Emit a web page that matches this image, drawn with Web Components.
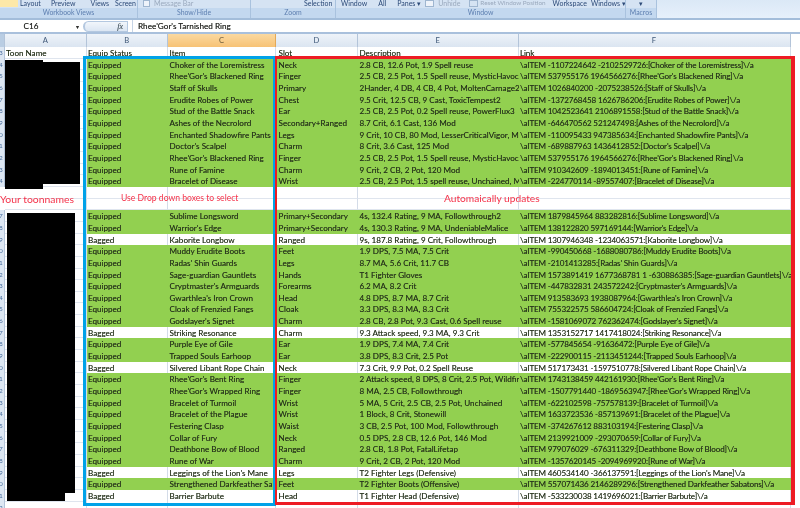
<!DOCTYPE html>
<html><head><meta charset="utf-8"><title>Gear sheet</title>
<style>
html,body{margin:0;padding:0;background:#fff;}
body{width:800px;height:508px;overflow:hidden;font-family:Lato,"Liberation Sans",sans-serif;color:#222;}
</style></head><body>
<xl-app>
  <xl-ribbon>
    <xl-rgroup w="138" label="Workbook Views"><i style="width:18px;height:8px;background:#fde8a8;margin-right:2px"></i><span>Layout</span><span style="margin-left:10px">Preview</span><span style="margin-left:15px">Views</span><span style="margin-left:6px">Screen</span></xl-rgroup>
    <xl-rgroup w="113" label="Show/Hide"><i style="width:5px;height:5px;border:1px solid #9fb6d0;background:#eef3fa;margin:0 4px 0 5px"></i><span style="color:#9aa9bd">Message Bar</span></xl-rgroup>
    <xl-rgroup w="85" label="Zoom"><span style="margin-left:53px">Selection</span></xl-rgroup>
    <xl-rgroup w="290" label="Window"><span style="margin-left:5px">Window</span><span style="margin-left:11px">All</span><span style="margin-left:11px">Panes ▾</span><i style="width:7px;height:5px;border:1px solid #9fb6d0;background:#eef3fa;margin:0 4px 0 4px"></i><span style="color:#9aa9bd">Unhide</span><i style="width:7px;height:5px;border:1px solid #9fb6d0;margin:0 2px 0 9px"></i><span style="color:#9aa9bd;font-size:6.4px">Reset Window Position</span><span style="margin-left:7px">Workspace</span><span style="margin-left:4px">Windows ▾</span></xl-rgroup>
    <xl-rgroup w="31" label="Macros"><span style="margin-left:13px">▾</span></xl-rgroup>
  </xl-ribbon>
  <xl-formula name="C16" value="Rhee'Gor's Tarnished Ring"></xl-formula>
  <xl-sheet></xl-sheet>
  <xl-overlays></xl-overlays>
</xl-app>
<script>
const COLS='5px 81.5px 81.5px 108px 82px 160.5px 272px 1fr';
const esc=s=>String(s).replace(/&/g,'&amp;').replace(/</g,'&lt;');
class XlApp extends HTMLElement{constructor(){super();this.attachShadow({mode:'open'}).innerHTML=`<style>:host{display:flex;flex-direction:column;position:relative;width:800px;height:508px;overflow:hidden;filter:blur(.3px);font:8.1px Lato,"Liberation Sans",sans-serif;color:#26331c}</style><slot></slot>`;}}
class XlRibbon extends HTMLElement{constructor(){super();this.attachShadow({mode:'open'}).innerHTML=`<style>:host{display:flex;flex:none;height:20px;box-sizing:border-box;background:linear-gradient(#dbe8f6,#e6f0fb);border-bottom:2px solid #a3bdda;overflow:hidden}</style><slot></slot>`;}}
class XlRgroup extends HTMLElement{connectedCallback(){if(this.shadowRoot)return;const r=this.attachShadow({mode:'open'});r.innerHTML=`<style>
:host{display:flex;flex-direction:column;flex:none;width:${this.getAttribute('w')}px;height:18px;box-sizing:border-box;border-right:1px solid #a9c2de;background:#d5e3f3;overflow:hidden;color:#2c4a78;font-size:7px}
.top{display:flex;align-items:flex-end;height:8px;box-sizing:border-box;padding-bottom:1px;flex:none;white-space:nowrap;overflow:hidden;line-height:8px}
.lab{height:10px;flex:none;background:#c3d8ef;text-align:center;color:#5d7fb0;font-size:6.9px;line-height:9px}
::slotted(*){flex:none;display:block}
</style><div class="top"><slot></slot></div><div class="lab">${esc(this.getAttribute('label'))}</div>`;}}
class XlFormula extends HTMLElement{connectedCallback(){if(this.shadowRoot)return;const r=this.attachShadow({mode:'open'});r.innerHTML=`<style>
:host{display:flex;flex:none;height:14px;box-sizing:border-box;align-items:center;background:#fff;border-bottom:2px solid #a9c0dc;font-size:8.2px;color:#222;text-shadow:0 0 .4px rgba(30,40,20,.6)}
.name{width:62px;text-align:center;box-sizing:border-box}
.arr{width:21px;font-size:6px;color:#333;text-align:right;padding-right:4px;box-sizing:border-box}
.fxb{width:45px;height:11px;box-sizing:border-box;border:1px solid #b4c8e0;border-left-width:2px;border-radius:6px 0 0 6px;background:linear-gradient(#f2f6fb,#dbe6f3);display:flex;justify-content:flex-end;align-items:center;padding-right:4px;font:italic 8px "Liberation Serif",serif;color:#567}
.val{flex:1;margin-left:4px;padding-left:5px;border-left:1px solid #c6d4e6;line-height:12px}
</style><div class="name">${esc(this.getAttribute('name'))}</div><div class="arr">▾</div><div class="fxb">fx</div><div class="val">${esc(this.getAttribute('value'))}</div>`;}}
class XlColhead extends HTMLElement{constructor(){super();const names=['','A','B','C','D','E','F',''];this.attachShadow({mode:'open'}).innerHTML=`<style>
:host{display:grid;flex:none;grid-template-columns:${COLS};height:13px;font-size:7.6px;color:#3f5878}
div{background:linear-gradient(#eef3f9,#dbe5f1);border-right:1px solid #b3c4d9;border-bottom:1px solid #b6c6da;text-align:center;line-height:13px;box-sizing:border-box}
.on{background:linear-gradient(#fbd9a0,#f7c275);color:#6a5a3a;border-right-color:#e3a858}
.corner{background:#b9cde3}
.end{background:#fff;border:0}
</style>`+names.map((n,i)=>`<div class="${i==3?'on':i==0?'corner':i==7?'end':''}">${n}</div>`).join('');}}
class XlRow extends HTMLElement{
  set data(d){
    const r=this.shadowRoot||this.attachShadow({mode:'open'});
    const bg=d.kind==='eq'?'#92d050':'#fff';
    const h=d.h||11.67;
    r.innerHTML=`<style>
:host{display:grid;flex:none;grid-template-columns:${COLS};height:${h}px;font-size:8.1px;line-height:${h+1.1}px;color:#26331c;text-shadow:0 0 .4px rgba(30,40,20,.6)}
div{box-sizing:border-box;overflow:hidden;white-space:nowrap;padding-left:1.5px}
.n{background:${d.plain?'#fff':'#dde7f3'};color:#4a6f9f;padding:0;font-size:6.5px;border-right:${d.plain?'0':'1px solid #b3c4d9'};text-indent:-1px;text-shadow:none}
.a{background:#fff;border-right:1px solid #d4dce8;border-bottom:1px solid #dfe5ee;padding-left:1px}
.c{background:${bg};${d.kind==='eq'?'':'border-right:1px solid #d4dce8;'}${d.kind==='blank'?'border-bottom:1px solid #dfe5ee;':''}}
.slot{padding-left:2.6px}
.link{letter-spacing:-.16px}
.end{background:#fff;padding:0}
</style><div class="n">${esc(d.n??'')}</div><div class="a">${esc(d.a||'')}</div>`+
    (d.cells||['','','','','']).map((c,i)=>`<div class="c${i==2?' slot':i==4?' link':''}">${esc(c)}</div>`).join('')+`<div class="end"></div>`;
  }
}
const E=1,B=0;
const blacken='2.5 CB, 2.5 Pot, 1.5 Spell reuse, MysticHavoc, Magic';
const R=[
[E,'Choker of the Loremistress','Neck','2.8 CB, 12.6 Pot, 1.9 Spell reuse','-1107224642 -2102529726'],
[E,"Rhee'Gor's Blackened Ring",'Finger',blacken,'537955176 1964566276'],
[E,'Staff of Skulls','Primary','2Hander, 4 DB, 4 CB, 4 Pot, MoltenCarnage2, Toxic','1026840200 -2075238526'],
[E,'Erudite Robes of Power','Chest','9.5 Crit, 12.5 CB, 9 Cast, ToxicTempest2','-1372768458 1626786206'],
[E,'Stud of the Battle Snack','Ear','2.5 CB, 2.5 Pot, 0.2 Spell reuse, PowerFlux3','1042523641 2106891558'],
[E,'Ashes of the Necrolord','Secondary+Ranged','8.7 Crit, 6.1 Cast, 136 Mod','-646470562 521247498'],
[E,'Enchanted Shadowfire Pants','Legs','9 Crit, 10 CB, 80 Mod, LesserCriticalVigor, Mod','-110095433 947385634'],
[E,"Doctor's Scalpel",'Charm','8 Crit, 3.6 Cast, 125 Mod','-689887963 1436412852'],
[E,"Rhee'Gor's Blackened Ring",'Finger',blacken,'537955176 1964566276'],
[E,'Rune of Famine','Charm','9 Crit, 2 CB, 2 Pot, 120 Mod','910342609 -1894013451'],
[E,'Bracelet of Disease','Wrist','2.5 CB, 2.5 Pot, 1.5 spell reuse, Unchained, Mod','-224770114 -89557407'],
null,null,
[E,'Sublime Longsword','Primary+Secondary','4s, 132.4 Rating, 9 MA, Followthrough2','1879845964 883282816'],
[E,"Warrior's Edge",'Primary+Secondary','4s, 130.3 Rating, 9 MA, UndeniableMalice','138122820 597169144'],
[B,'Kaborite Longbow','Ranged','9s, 187.8 Rating, 9 Crit, Followthrough','1307946348 -1234063571'],
[E,'Muddy Erudite Boots','Feet','1.9 DPS, 7.5 MA, 7.5 Crit','-990450668 -1688080786'],
[E,"Radas' Shin Guards",'Legs','8.7 MA, 5.6 Crit, 11.7 CB','-2101413285'],
[E,'Sage-guardian Gauntlets','Hands','T1 Fighter Gloves','1573891419 1677368781 1 -630886385'],
[E,"Cryptmaster's Armguards",'Forearms','6.2 MA, 8.2 Crit','-447832831 243572242'],
[E,"Gwarthlea's Iron Crown",'Head','4.8 DPS, 8.7 MA, 8.7 Crit','913583693 1938087964'],
[E,'Cloak of Frenzied Fangs','Cloak','3.3 DPS, 8.3 MA, 8.3 Crit','755322575 586604724'],
[E,"Godslayer's Signet",'Charm','2.8 CB, 2.8 Pot, 9.3 Cast, 0.6 Spell reuse','-1581069072 762362474'],
[B,'Striking Resonance','Charm','9.3 Attack speed, 9.3 MA, 9.3 Crit','1353152717 1417418024'],
[E,'Purple Eye of Gile','Ear','1.9 DPS, 7.4 MA, 7.4 Crit','-577845654 -91636472'],
[E,'Trapped Souls Earhoop','Ear','3.8 DPS, 8.3 Crit, 2.5 Pot','-222900115 -2113451244'],
[B,'Silvered Libant Rope Chain','Neck','7.3 Crit, 9.9 Pot, 0.2 Spell Reuse','517173431 -1597510778'],
[E,"Rhee'Gor's Bent Ring",'Finger','2 Attack speed, 8 DPS, 8 Crit, 2.5 Pot, Wildfire','1743138459 442161930'],
[E,"Rhee'Gor's Wrapped Ring",'Finger','8 MA, 2.5 CB, Followthrough','-1507791440 -1869563947'],
[E,'Bracelet of Turmoil','Wrist','5 MA, 5 Crit, 2.5 CB, 2.5 Pot, Unchained','-622102598 -757578139'],
[E,'Bracelet of the Plague','Wrist','1 Block, 8 Crit, Stonewill','1633723536 -857139691'],
[E,'Festering Clasp','Waist','3 CB, 2.5 Pot, 100 Mod, Followthrough','-374267612 883103194'],
[E,'Collar of Fury','Neck','0.5 DPS, 2.8 CB, 12.6 Pot, 146 Mod','2139921009 -293070659'],
[E,'Deathbone Bow of Blood','Ranged','2.8 CB, 1.8 Pot, FatalLifetap','979076029 -676311329'],
[E,'Rune of War','Charm','9 Crit, 2 CB, 2 Pot, 120 Mod','-1357620145 -2094969920'],
[B,"Leggings of the Lion's Mane",'Legs','T2 Fighter Legs (Defensive)','460534140 -366137591'],
[E,'Strengthened Darkfeather Sabatons','Feet','T2 Fighter Boots (Offensive)','557071436 2146289296'],
[B,'Barrier Barbute','Head','T1 Fighter Head (Defensive)','-533230038 1419696021']
];
class XlSheet extends HTMLElement{connectedCallback(){if(this.shadowRoot)return;
  const r=this.attachShadow({mode:'open'});
  r.innerHTML=`<style>:host{display:flex;flex-direction:column;flex:1;min-height:0;overflow:hidden;background:#fff}</style>`;
  r.appendChild(document.createElement('xl-colhead'));
  const add=d=>{const e=document.createElement('xl-row');e.data=d;r.appendChild(e);};
  add({kind:'head',h:11.7,n:'3',cells:['Equip Status','Item','Slot','Description','Link']});
  const first=r.lastChild;first.shadowRoot.querySelector('.a').textContent='Toon Name';
  R.forEach((x,i)=>{const n=(i+4)%10;
    if(!x)add({kind:'blank',n:'',plain:true});
    else add({kind:x[0]?'eq':'bag',n,cells:[x[0]?'Equipped':'Bagged',x[1],x[2],x[3],`\\aITEM ${x[4]}:[${x[1]}]\\/a`]});});
  add({kind:'blank',n:2,h:11.67});
}}
class XlOverlays extends HTMLElement{connectedCallback(){if(this.shadowRoot)return;
  this.attachShadow({mode:'open'}).innerHTML=`<style>
:host{position:absolute;inset:0;display:block;pointer-events:none}
.box{position:absolute;box-sizing:border-box;border-style:solid;border-width:3px}
.blue{left:83px;top:56px;width:192.5px;height:450px;border-color:#00a2e8}
.red{left:275px;top:56px;width:520px;height:448.5px;border-color:#ed1c24;border-right-width:4px;border-left-width:2.6px}
svg{position:absolute;left:0;top:0}
.t{position:absolute;color:#f5334a;white-space:nowrap;line-height:12px;font-size:8.6px}
</style>
<svg width="800" height="508"><path fill="#000" d="M5 60H43V62H80V184H43V189H5Z"/><path fill="#000" d="M7 213H75V493H65V501H7Z"/></svg>
<div class="box blue"></div><div class="box red"></div>
<div class="t" style="left:0;top:193px;font-size:10.4px">Your toonnames</div>
<div class="t" style="left:121px;top:192px">Use Drop down boxes to select</div>
<div class="t" style="left:444px;top:192px;font-size:10.2px">Automaically updates</div>`;}}
customElements.define('xl-app',XlApp);
customElements.define('xl-ribbon',XlRibbon);
customElements.define('xl-rgroup',XlRgroup);
customElements.define('xl-formula',XlFormula);
customElements.define('xl-colhead',XlColhead);
customElements.define('xl-row',XlRow);
customElements.define('xl-sheet',XlSheet);
customElements.define('xl-overlays',XlOverlays);
</script>
</body></html>
